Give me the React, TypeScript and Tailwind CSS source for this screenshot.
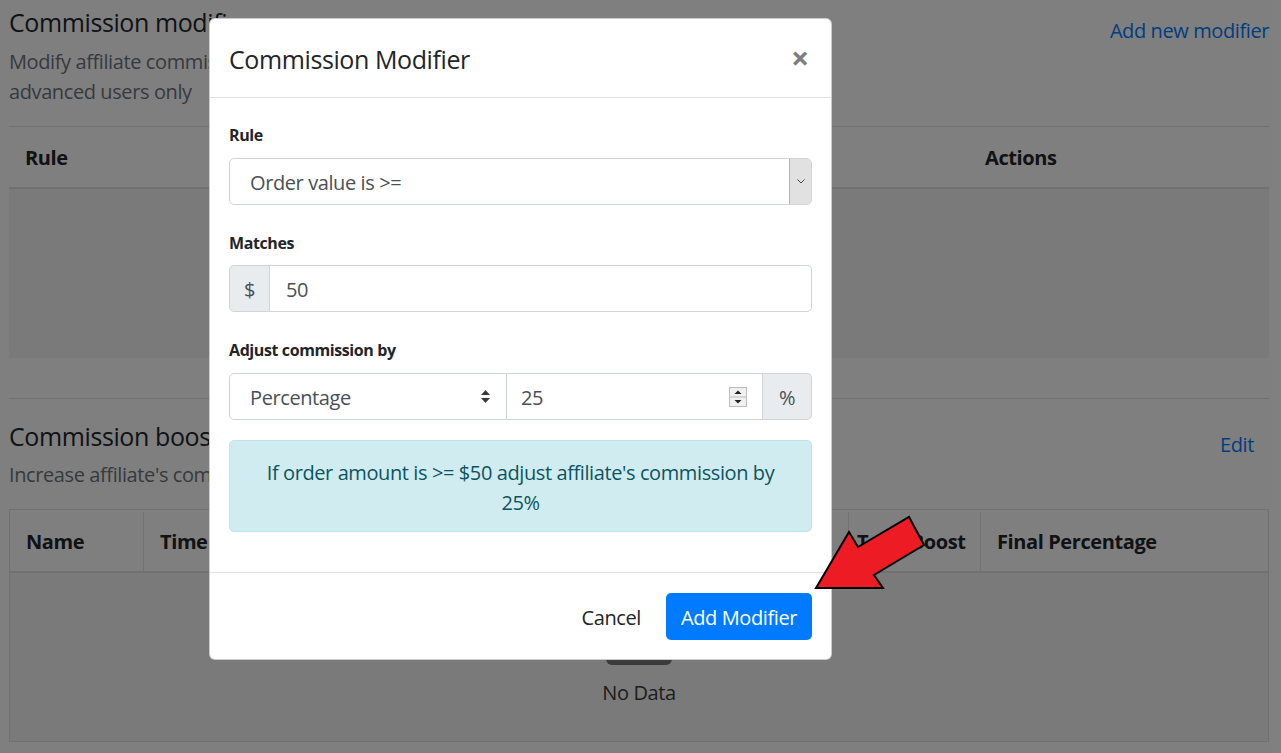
import React from "react";

function SelectChevron() {
  return (
    <div className="flex w-[22px] items-center justify-center self-stretch rounded-r-[4px] border-l border-[#b5b5b5] bg-[#e1e1e1]">
      <svg width="8" height="5" viewBox="0 0 8 5" fill="none">
        <path d="M0.5 0.5 L4 4 L7.5 0.5" stroke="#444" strokeWidth="1" />
      </svg>
    </div>
  );
}

function DoubleArrow() {
  return (
    <svg width="9" height="13" viewBox="0 0 9 13">
      <path d="M4.5 0 L9 5 L0 5 Z" fill="#343a40" />
      <path d="M4.5 13 L9 8 L0 8 Z" fill="#343a40" />
    </svg>
  );
}

function Spinner() {
  return (
    <svg width="18" height="20" viewBox="0 0 18 20">
      <rect x="0.5" y="0.5" width="17" height="19" fill="#f0f0f0" stroke="#bdbdbd" />
      <line x1="1" y1="10" x2="17" y2="10" stroke="#bdbdbd" />
      <path d="M9 3.5 L12.5 7 L5.5 7 Z" fill="#222" />
      <path d="M9 16.5 L12.5 13 L5.5 13 Z" fill="#222" />
    </svg>
  );
}

function Page() {
  return (
    <div className="pl-[9px] pr-[12px]">
      <div className="flex justify-between">
        <div>
          <h4 className="mt-[7px] text-[25px] leading-[30px]">Commission modifiers</h4>
          <p className="mt-[10px] text-[20px] leading-[30px] text-[#6c757d]">
            Modify affiliate commission rates with custom rules, intended for
            <br />
            advanced users only
          </p>
        </div>
        <a className="mt-[16px] h-fit text-[20px] leading-[30px] text-[#007bff]">Add new modifier</a>
      </div>

      <div className="mt-[19px] border-t border-[#dee2e6]">
        <div className="grid h-[62px] grid-cols-[300px_330px_330px_1fr] items-center border-b-2 border-[#dee2e6] pt-[2px] text-[20px] font-bold">
          <div className="px-4">Rule</div>
          <div className="px-4">Matches</div>
          <div className="px-4">Adjustment</div>
          <div className="px-4">Actions</div>
        </div>
        <div className="h-[169px] bg-[#f5f5f5]" />
      </div>

      <div className="mt-[40px] border-t border-[#dee2e6]" />

      <div className="flex justify-between">
        <div>
          <h4 className="mt-[22px] text-[25px] leading-[30px]">Commission boosts</h4>
          <p className="mt-[9px] text-[20px] leading-[30px] text-[#6c757d]">
            Increase affiliate's commission for a limited period of time
          </p>
        </div>
        <a className="mr-[15px] mt-[31px] h-fit text-[20px] leading-[30px] text-[#007bff]">Edit</a>
      </div>

      <div className="mt-[19px] border border-[#dee2e6]">
        <div className="grid h-[63px] grid-cols-[134px_235px_235px_235px_132px_1fr] whitespace-nowrap border-b-2 border-[#dee2e6] pt-[2px] text-[20px] font-bold">
          <div className="flex items-center overflow-hidden border-r border-[#dee2e6] px-4">Name</div>
          <div className="flex items-center overflow-hidden border-r border-[#dee2e6] px-4">Time Period</div>
          <div className="flex items-center overflow-hidden border-r border-[#dee2e6] px-4">Base</div>
          <div className="flex items-center overflow-hidden border-r border-[#dee2e6] px-4">Base Rate</div>
          <div className="flex items-center overflow-hidden border-r border-[#dee2e6] pl-[8px]">Total Boost</div>
          <div className="flex items-center overflow-hidden px-4">Final Percentage</div>
        </div>
        <div className="flex h-[168px] flex-col items-center bg-[#f5f5f5] pt-[52px]">
          <div className="h-[40px] w-[66px] rounded-b-[6px] bg-[#777]" />
          <div className="mt-[13px] text-[20px] leading-[30px] text-[#3a3a3a]">No Data</div>
        </div>
      </div>
    </div>
  );
}

function Modal() {
  return (
    <div className="absolute left-[209px] top-[18px] flex w-[623px] flex-col rounded-[6px] border border-black/20 bg-white">
      <div className="flex h-[79px] items-center justify-between border-b border-[#dee2e6] pl-[19px] pr-[22px]">
        <h5 className="pt-[1px] text-[25px] leading-[30px] text-[#212529]">Commission Modifier</h5>
        <span className="text-[32px] font-bold leading-none text-black opacity-50">×</span>
      </div>

      <div className="px-[19px] pb-[40px] pt-[25px]">
        <label className="block text-[16px] font-bold leading-[24px]">Rule</label>
        <div className="mt-[11px] flex h-[47px] items-stretch rounded-[5px] border border-[#ced4da]">
          <div className="flex flex-1 items-center pl-[20px] pt-[2px] text-[20px] text-[#495057]">Order value is &gt;=</div>
          <SelectChevron />
        </div>

        <label className="mt-[26px] block text-[16px] font-bold leading-[24px]">Matches</label>
        <div className="mt-[10px] flex h-[47px]">
          <div className="flex w-[41px] items-center justify-center rounded-l-[5px] border border-[#ced4da] bg-[#e9ecef] pt-[2px] text-[20px] text-[#495057]">
            $
          </div>
          <div className="flex flex-1 items-center rounded-r-[5px] border border-l-0 border-[#ced4da] pl-[16px] pt-[2px] text-[20px] text-[#495057]">
            50
          </div>
        </div>

        <label className="mt-[26px] block text-[16px] font-bold leading-[24px]">Adjust commission by</label>
        <div className="mt-[11px] flex h-[47px]">
          <div className="flex w-[278px] items-center justify-between rounded-l-[5px] border border-[#ced4da] pl-[20px] pr-[16px] text-[20px] text-[#495057]">
            <span className="pt-[2px]">Percentage</span>
            <DoubleArrow />
          </div>
          <div className="flex w-[256px] items-center justify-between border-y border-r border-[#ced4da] pl-[14px] pr-[15px] text-[20px] text-[#495057]">
            <span className="pt-[2px]">25</span>
            <Spinner />
          </div>
          <div className="flex flex-1 items-center justify-center rounded-r-[5px] border-y border-r border-[#ced4da] bg-[#e9ecef] pt-[2px] text-[20px] text-[#495057]">
            %
          </div>
        </div>

        <div className="mt-[20px] rounded-[5px] border border-[#bee5eb] bg-[#d1ecf1] px-[20px] pb-[13px] pt-[17px] text-center text-[20px] leading-[30px] text-[#0c5460]">
          If order amount is &gt;= $50 adjust affiliate's commission by 25%
        </div>
      </div>

      <div className="flex items-center justify-end gap-[9px] border-t border-[#dee2e6] px-[19px] pb-[19px] pt-[20px]">
        <button className="px-[16px] pt-[2px] text-[20px] text-[#212529]">Cancel</button>
        <button className="h-[47px] rounded-[5px] bg-[#007bff] px-[15px] pt-[2px] text-[20px] text-white">Add Modifier</button>
      </div>
    </div>
  );
}

function Arrow() {
  return (
    <svg className="pointer-events-none absolute left-0 top-0" width="1281" height="753" viewBox="0 0 1281 753">
      <polygon
        points="816,588 849,532 858,547 909,517 924,545 874,575 883,588"
        fill="#ed1c24"
        stroke="#000"
        strokeWidth="2"
        strokeLinejoin="miter"
      />
    </svg>
  );
}

export default function App() {
  return (
    <div className="relative h-[753px] w-[1281px] overflow-hidden bg-white font-['Open_Sans',sans-serif] tracking-[-0.025em] text-[#212529]">
      <Page />
      <div className="absolute inset-0 bg-black/50" />
      <Modal />
      <Arrow />
    </div>
  );
}
